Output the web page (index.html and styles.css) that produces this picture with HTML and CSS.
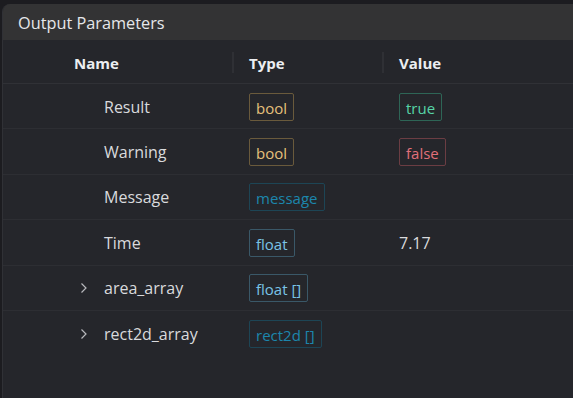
FILE: index.html
```html
<!DOCTYPE html>
<html lang="en">
<head>
    <meta charset="UTF-8">
    <link rel="stylesheet" href="styles.css">
</head>
<body>
    <div class="panel">
        <div class="panel-title">Output Parameters</div>

        <div class="param-table">
            <div class="row head">
                <div class="cell name">Name</div>
                <div class="cell type"><span class="sep"></span>Type</div>
                <div class="cell value"><span class="sep"></span>Value</div>
            </div>

            <div class="row">
                <div class="cell name"><span class="chev"></span>Result</div>
                <div class="cell type"><span class="tag tag-bool">bool</span></div>
                <div class="cell value"><span class="tag tag-true">true</span></div>
            </div>

            <div class="row">
                <div class="cell name"><span class="chev"></span>Warning</div>
                <div class="cell type"><span class="tag tag-bool">bool</span></div>
                <div class="cell value"><span class="tag tag-false">false</span></div>
            </div>

            <div class="row">
                <div class="cell name"><span class="chev"></span>Message</div>
                <div class="cell type"><span class="tag tag-msg">message</span></div>
                <div class="cell value"></div>
            </div>

            <div class="row">
                <div class="cell name"><span class="chev"></span>Time</div>
                <div class="cell type"><span class="tag tag-float">float</span></div>
                <div class="cell value">7.17</div>
            </div>

            <div class="row">
                <div class="cell name">
                    <span class="chev">
                        <svg width="8" height="12" viewBox="0 0 8 12"><path d="M1.5 1.5 L6 6 L1.5 10.5" fill="none" stroke="#b8b9bd" stroke-width="1.2"/></svg>
                    </span>area_array
                </div>
                <div class="cell type"><span class="tag tag-float">float []</span></div>
                <div class="cell value"></div>
            </div>

            <div class="row last">
                <div class="cell name">
                    <span class="chev">
                        <svg width="8" height="12" viewBox="0 0 8 12"><path d="M1.5 1.5 L6 6 L1.5 10.5" fill="none" stroke="#b8b9bd" stroke-width="1.2"/></svg>
                    </span>rect2d_array
                </div>
                <div class="cell type"><span class="tag tag-msg">rect2d []</span></div>
                <div class="cell value"></div>
            </div>
        </div>
    </div>
</body>
</html>
```

FILE: styles.css
```css
* {
    margin: 0;
    padding: 0;
    box-sizing: border-box;
}

body {
    font-family: "Open Sans", "Noto Sans", sans-serif;
    background-color: #1c1c20;
    color: #d9dadd;
    height: 100vh;
    overflow: hidden;
    padding: 4px 0 0 2px;
}

.panel {
    background-color: #25262b;
    border-left: 1px solid #303136;
    border-radius: 8px 0 0 0;
    height: 100%;
    overflow: hidden;
}

.panel-title {
    background-color: #333334;
    height: 36px;
    padding: 2px 0 0 15px;
    display: flex;
    align-items: center;
    font-size: 16.3px;
    color: #e6e7ea;
}

.row {
    display: grid;
    grid-template-columns: 229px 150px 1fr;
    height: 45.4px;
    padding-top: 1px;
    border-bottom: 1px solid #2d2e33;
    font-size: 16px;
}

.row.head {
    height: 44px;
    padding-top: 3px;
    border-bottom-color: #303136;
    font-size: 15px;
    font-weight: 700;
    color: #eceef1;
}

.row.last {
    border-bottom: none;
}

.cell {
    display: flex;
    align-items: center;
    position: relative;
}

.cell.name {
    padding-left: 71px;
}

.cell.type,
.cell.value {
    padding-left: 17px;
}

.sep {
    position: absolute;
    left: 0;
    top: 9px;
    width: 2px;
    height: 21px;
    background-color: #2f3035;
}

.chev {
    width: 30px;
    display: flex;
    align-items: center;
    padding-left: 6px;
}

.tag {
    display: inline-block;
    font-size: 15px;
    line-height: 20px;
    padding: 4px 6px 2px;
    border: 1px solid;
    border-radius: 2px;
}

.tag-bool {
    color: #e5c07b;
    border-color: #6a5a3c;
}

.tag-true {
    color: #56d4a6;
    border-color: #2e6556;
}

.tag-false {
    color: #e0707a;
    border-color: #6b3d43;
}

.tag-msg {
    color: #1c86ad;
    border-color: #1d4555;
}

.tag-float {
    color: #79c3e6;
    border-color: #3a5868;
}
```
